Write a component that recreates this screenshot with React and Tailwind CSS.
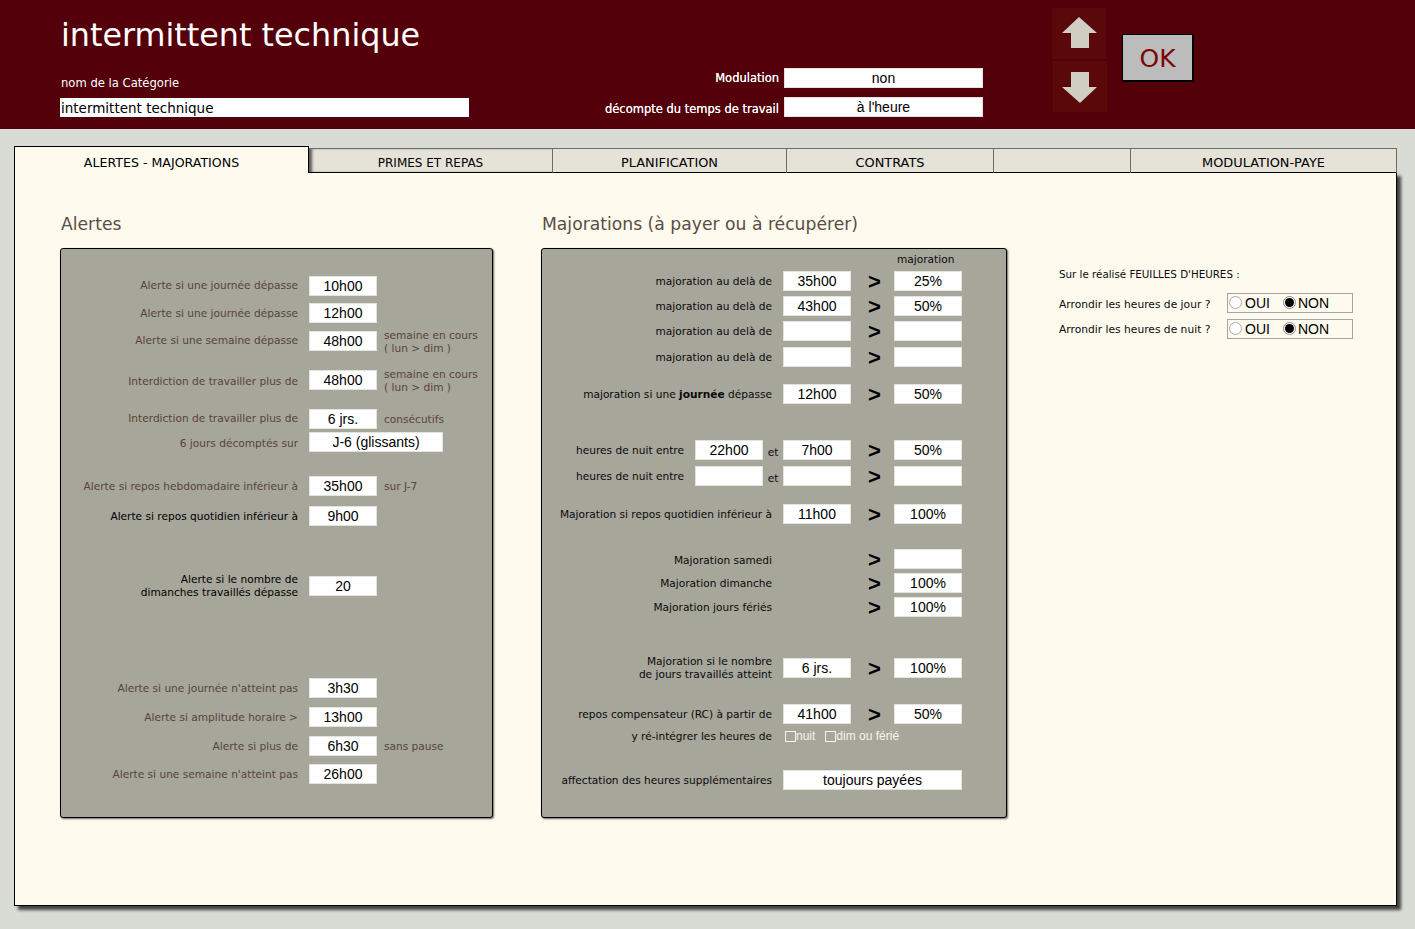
import React from 'react';

const Field = ({className = 'w-[68px]', children}) => (
    <div className={"h-5 shrink-0 bg-white border border-[#e3e3df] text-center text-black font-['Liberation_Sans',sans-serif] text-[14px] leading-[18px] " + className}>{children}</div>
);

const AlertRow = ({mt, label, value, note, wide, dark, pt = 'pt-px'}) => (
    <div className={"flex items-center h-5 " + mt}>
        <div className={"w-[237px] shrink-0 text-right whitespace-nowrap " + pt + " " + (dark ? "text-black" : "text-[#574439]")}>{label}</div>
        <Field className={wide ? "ml-[11px] w-[134px]" : "ml-[11px] w-[68px]"}>{value}</Field>
        {note && <div className="ml-[7px] pt-px text-[#574439] whitespace-nowrap">{note}</div>}
    </div>
);

const Gt = () => (
    <div className="w-[43px] shrink-0 pl-1 pt-px text-center font-['Liberation_Sans',sans-serif] font-bold text-[22px] leading-5 text-black">&gt;</div>
);

const MajRow = ({mt, label, b, c, noB, pt = 'pt-px'}) => (
    <div className={"flex items-center h-5 " + mt}>
        <div className={"w-[230px] shrink-0 text-right whitespace-nowrap text-[#0a0a0a] " + pt}>{label}</div>
        <div className="ml-[11px] w-[68px] shrink-0">{!noB && <Field>{b}</Field>}</div>
        <Gt />
        <Field>{c}</Field>
    </div>
);

const NightRow = ({mt, a, b, c}) => (
    <div className={"flex items-center h-5 " + mt}>
        <div className="w-[142px] shrink-0 pt-px text-right whitespace-nowrap text-[#0a0a0a]">heures de nuit entre</div>
        <Field className="ml-[11px] w-[68px]">{a}</Field>
        <div className="w-5 shrink-0 text-center pt-1 text-[#0a0a0a]">et</div>
        <Field>{b}</Field>
        <Gt />
        <Field>{c}</Field>
    </div>
);

const Radio = ({on}) => (
    <span className={"w-[13px] h-[13px] rounded-full border shrink-0 flex items-center justify-center -mt-px " + (on ? "border-[#8a8a8a] bg-white" : "border-[#aaa] bg-white")}>
        {on && <span className="w-[9px] h-[9px] rounded-full bg-black"></span>}
    </span>
);

const Arrondir = ({mt, label, pt}) => (
    <div className={"flex items-center h-[20px] " + mt}>
        <div className={"w-[168px] shrink-0 text-[10.7px] whitespace-nowrap text-[#0a0a0a] " + pt}>{label}</div>
        <div className="w-[126px] h-[20px] border border-[#a5a5a5] flex items-center pl-[1px] font-['Liberation_Sans',sans-serif] text-[14px] text-black">
            <Radio />
            <span className="ml-[3px]">OUI</span>
            <span className="ml-[13px]"><Radio on /></span>
            <span className="ml-[2px]">NON</span>
        </div>
    </div>
);

const Arrow = ({down}) => (
    <svg width="54" height="51" viewBox="0 0 54 51" className="block bg-[#5b080b]">
        {down
            ? <polygon points="18,11 36,11 36,26 44,26 27,42 9,26 18,26" fill="#d0cdc2" />
            : <polygon points="19,40 37,40 37,25 45,25 27,9 10,25 19,25" fill="#d0cdc2" />}
    </svg>
);

const Tab = ({className, children}) => (
    <div className={"h-[25px] bg-[#e5e2d8] border-t border-r border-[#6e6e68] border-b-black border-b leading-[27px] text-center text-black whitespace-nowrap " + className}>{children}</div>
);

export default function App() {
    return (
        <div className="h-[929px] overflow-hidden bg-[#d9dcd5] font-['DejaVu_Sans',sans-serif] text-[10.6px] leading-[13px]">
            <header className="h-[129px] bg-[#54000b] flex text-white">
                <div className="w-[409px] ml-[60px] shrink-0">
                    <h1 className="pl-[1px] pt-[13px] text-[31.8px] leading-[44px] whitespace-nowrap">intermittent technique</h1>
                    <div className="pl-[1px] mt-[19px] text-[11.6px] leading-[14px]">nom de la Catégorie</div>
                    <div className="mt-[8px] h-[19px] bg-white text-black pl-[1px] text-[13.5px] leading-5 whitespace-nowrap">intermittent technique</div>
                </div>
                <div className="w-[514px] pt-[68px] shrink-0">
                    <div className="flex h-5 items-center justify-end">
                        <span className="text-[11.5px] pt-px mr-[5px] [text-shadow:0_0_0.3px_#ffffff]">Modulation</span>
                        <Field className="w-[199px]">non</Field>
                    </div>
                    <div className="flex h-5 items-center justify-end mt-[9px]">
                        <span className="text-[11.5px] pt-[5px] mr-[5px] [text-shadow:0_0_0.3px_#ffffff]">décompte du temps de travail</span>
                        <Field className="w-[199px]">à l'heure</Field>
                    </div>
                </div>
                <div className="ml-[69px] pt-[8px] shrink-0">
                    <Arrow />
                    <div className="mt-[2px] ml-[1px]"><Arrow down /></div>
                </div>
                <button className="ml-[15px] mt-[34px] w-[71px] h-[47px] pt-px bg-[#bcbcbc] border border-black shadow-[1px_1px_0_#000] text-[#7d0505] text-[25px] leading-none">OK</button>
            </header>

            <div className="ml-[14px] mt-[17px] w-[1383px]">
                <div className="flex items-end h-[27px] relative z-10 -mb-px">
                    <div className="w-[295px] h-[27px] bg-[#fffaee] border-l border-t border-r border-black text-center text-[12.6px] leading-[31px] text-black">ALERTES - MAJORATIONS</div>
                    <Tab className="w-[244px] pt-px text-[12px] shadow-[inset_4px_0_3px_-1px_rgba(0,0,0,0.6)]">PRIMES ET REPAS</Tab>
                    <Tab className="w-[234px] text-[12.9px]">PLANIFICATION</Tab>
                    <Tab className="w-[207px] text-[12.9px]">CONTRATS</Tab>
                    <Tab className="w-[137px]"></Tab>
                    <Tab className="w-[266px] text-[12.9px]">MODULATION-PAYE</Tab>
                </div>
                <main className="h-[734px] bg-[#fffaee] border border-black shadow-[4px_4px_3px_rgba(0,0,0,0.7)] flex pl-[45px]">
                    <section className="w-[433px] shrink-0">
                        <h2 className="mt-[39px] pl-[1px] text-[17.2px] leading-6 text-[#5a4d45]">Alertes</h2>
                        <div className="mt-[12px] h-[570px] bg-[#a6a69b] border border-black rounded-[3px] shadow-[1px_1px_2px_rgba(0,0,0,0.6)] pt-[27px]">
                            <AlertRow mt="" pt="pb-px" label="Alerte si une journée dépasse" value="10h00" />
                            <AlertRow mt="mt-[7px]" label="Alerte si une journée dépasse" value="12h00" />
                            <AlertRow mt="mt-[8px]" pt="pb-px" label="Alerte si une semaine dépasse" value="48h00" note={<>semaine en cours<br />( lun &gt; dim )</>} />
                            <AlertRow mt="mt-[19px]" pt="pt-[3px]" label="Interdiction de travailler plus de" value="48h00" note={<>semaine en cours<br />( lun &gt; dim )</>} />
                            <AlertRow mt="mt-[19px]" pt="pb-px" label="Interdiction de travailler plus de" value="6 jrs." note="consécutifs" />
                            <AlertRow mt="mt-[3px]" pt="pt-[3px]" label="6 jours décomptés sur" value="J-6 (glissants)" wide />
                            <AlertRow mt="mt-[24px]" label="Alerte si repos hebdomadaire inférieur à" value="35h00" note="sur J-7" />
                            <AlertRow mt="mt-[10px]" label="Alerte si repos quotidien inférieur à" value="9h00" dark />
                            <AlertRow mt="mt-[50px]" label={<>Alerte si le nombre de<br />dimanches travaillés dépasse</>} value="20" dark pt="pb-px" />
                            <AlertRow mt="mt-[82px]" label="Alerte si une journée n'atteint pas" value="3h30" />
                            <AlertRow mt="mt-[9px]" label="Alerte si amplitude horaire >" value="13h00" />
                            <AlertRow mt="mt-[9px]" label="Alerte si plus de" value="6h30" note="sans pause" />
                            <AlertRow mt="mt-[8px]" label="Alerte si une semaine n'atteint pas" value="26h00" />
                        </div>
                    </section>

                    <section className="ml-[48px] w-[466px] shrink-0">
                        <h2 className="mt-[39px] pl-[1px] text-[17.2px] leading-6 text-[#5a4d45] whitespace-nowrap">Majorations (à payer ou à récupérer)</h2>
                        <div className="mt-[12px] h-[570px] bg-[#a6a69b] border border-black rounded-[3px] shadow-[1px_1px_2px_rgba(0,0,0,0.6)]">
                            <div className="pt-[3px] pl-[355px] h-[18px] leading-[14px] text-[#0a0a0a]">majoration</div>
                            <MajRow mt="mt-[4px]" label="majoration au delà de" b="35h00" c="25%" />
                            <MajRow mt="mt-[5px]" label="majoration au delà de" b="43h00" c="50%" />
                            <MajRow mt="mt-[5px]" label="majoration au delà de" />
                            <MajRow mt="mt-[6px]" label="majoration au delà de" />
                            <MajRow mt="mt-[17px]" label={<>majoration si une <b>journée</b> dépasse</>} b="12h00" c="50%" />
                            <NightRow mt="mt-[36px]" a="22h00" b="7h00" c="50%" />
                            <NightRow mt="mt-[6px]" />
                            <MajRow mt="mt-[18px]" label="Majoration si repos quotidien inférieur à" b="11h00" c="100%" />
                            <MajRow mt="mt-[25px]" pt="pt-[3px]" label="Majoration samedi" noB />
                            <MajRow mt="mt-[4px]" label="Majoration dimanche" noB c="100%" />
                            <MajRow mt="mt-[4px]" label="Majoration jours fériés" noB c="100%" />
                            <MajRow mt="mt-[41px]" pt="pb-px" label={<>Majoration si le nombre<br />de jours travaillés atteint</>} b="6 jrs." c="100%" />
                            <MajRow mt="mt-[26px]" label="repos compensateur (RC) à partir de" b="41h00" c="50%" />
                            <div className="flex items-center h-5 mt-[2px]">
                                <div className="w-[230px] shrink-0 pt-px text-right whitespace-nowrap text-[#0a0a0a]">y ré-intégrer les heures de</div>
                                <div className="ml-[13px] flex items-center font-['Liberation_Sans',sans-serif] text-[12px] text-[#f5f4ee]">
                                    <span className="w-[11px] h-[11px] border border-[#f4f4f0]"></span>
                                    <span>nuit</span>
                                    <span className="ml-[10px] w-[11px] h-[11px] border border-[#f4f4f0]"></span>
                                    <span>dim ou férié</span>
                                </div>
                            </div>
                            <div className="flex items-center h-5 mt-[24px]">
                                <div className="w-[230px] shrink-0 pt-px text-right whitespace-nowrap text-[#0a0a0a]">affectation des heures supplémentaires</div>
                                <Field className="ml-[11px] w-[179px]">toujours payées</Field>
                            </div>
                        </div>
                    </section>

                    <aside className="ml-[52px] pt-[94px]">
                        <div className="h-[14px] leading-[14px] text-[10.3px] whitespace-nowrap text-[#0a0a0a]">Sur le réalisé FEUILLES D'HEURES :</div>
                        <Arrondir mt="mt-[12px]" pt="pt-[2px]" label="Arrondir les heures de jour ?" />
                        <Arrondir mt="mt-[6px]" pt="" label="Arrondir les heures de nuit ?" />
                    </aside>
                </main>
            </div>
        </div>
    );
}
